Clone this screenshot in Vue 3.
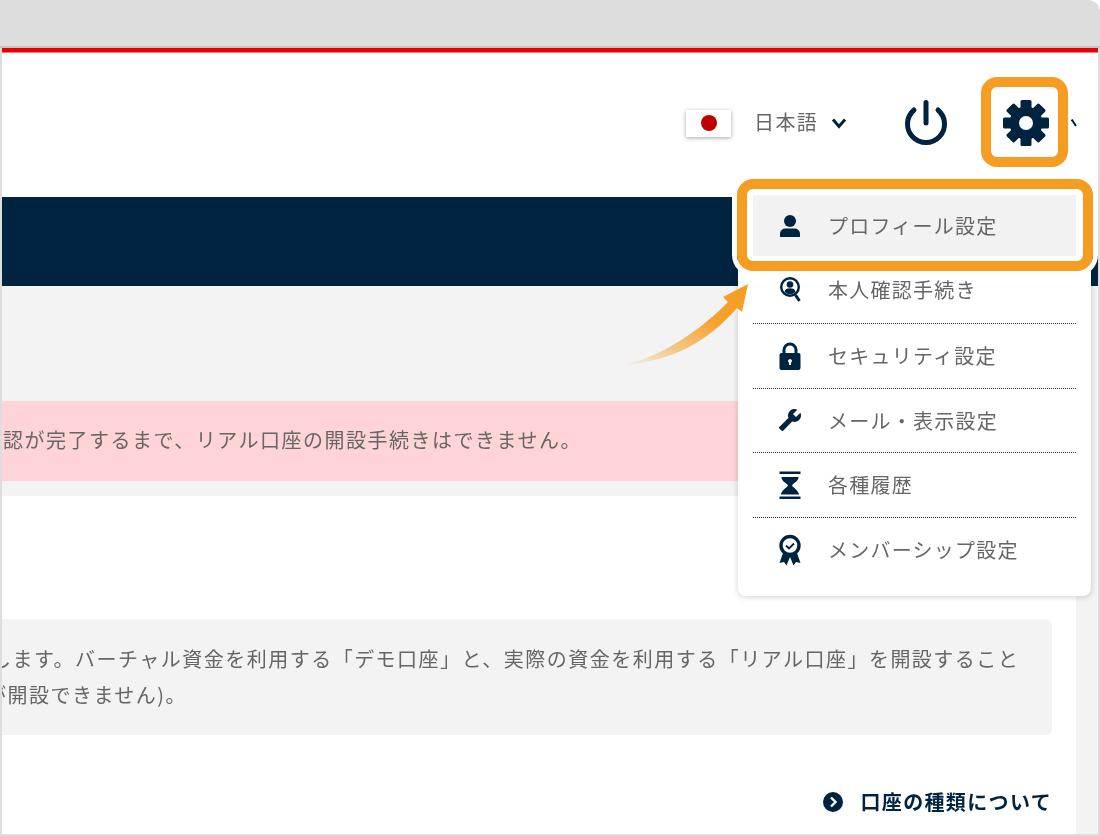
<script setup>
const teeth = [0, 45, 90, 135, 180, 225, 270, 315]
const items = [
  { key: 'person', label: 'プロフィール設定', active: true },
  { key: 'verify', label: '本人確認手続き' },
  { key: 'lock', label: 'セキュリティ設定' },
  { key: 'wrench', label: 'メール・表示設定' },
  { key: 'hourglass', label: '各種履歴' },
  { key: 'award', label: 'メンバーシップ設定' }
]
</script>

<template>
  <div class="window">
    <div class="titlebar"></div>
    <div class="page">
      <div class="redbar"></div>
      <header class="header">
        <span class="flag"><i></i></span>
        <span class="lang soft">日本語</span>
        <svg class="chev" width="16" height="12" viewBox="0 0 16 12"><path d="M2 2.500 8 9.500 14 2.500" fill="none" stroke="#00243f" stroke-width="3"/></svg>
        <svg class="power" width="44" height="46" viewBox="-22 -24 44 46">
          <path d="M-12-14A18.5 18.5 0 1 0 12-14" fill="none" stroke="#00243f" stroke-width="5" stroke-linecap="round"/>
          <path d="M0-21.5V-1" fill="none" stroke="#00243f" stroke-width="5" stroke-linecap="round"/>
        </svg>
        <svg class="gear" width="48" height="48" viewBox="-24 -24 48 48">
          <rect v-for="a in teeth" :key="a" x="-5.5" y="-23" width="11" height="12" rx="1.5" fill="#00243f" :transform="`rotate(${a})`"/>
          <circle r="16.5" fill="#00243f"/>
          <circle r="7" fill="#fff"/>
        </svg>
        <svg class="chev-cut" width="6" height="8" viewBox="0 0 6 8"><path d="M.7.5 5 7" fill="none" stroke="#00243f" stroke-width="2"/></svg>

        <nav class="menu">
          <a v-for="item in items" :key="item.key" class="row" :class="{ active: item.active }">
            <svg class="icon" width="24" height="32" viewBox="0 0 24 32">
              <template v-if="item.key === 'person'">
                <circle cx="12" cy="11" r="6" fill="#00243f"/>
                <path d="M2 27v-3c0-3.500 2.500-5.500 6-5.500h8c3.500 0 6 2 6 5.500v3z" fill="#00243f"/>
              </template>
              <template v-else-if="item.key === 'verify'">
                <circle cx="12" cy="13" r="8.800" fill="none" stroke="#00243f" stroke-width="2.400"/>
                <circle cx="12" cy="10.500" r="3.300" fill="#00243f"/>
                <path d="M6.500 18c.5-3 2.500-3.800 5.500-3.800s5 .8 5.500 3.800a8 8 0 0 1-11 0z" fill="#00243f"/>
                <path d="M17.500 21l4 6" fill="none" stroke="#00243f" stroke-width="3"/>
              </template>
              <template v-else-if="item.key === 'lock'">
                <path d="M6 15v-5a6 6 0 0 1 12 0v5" fill="none" stroke="#00243f" stroke-width="3"/>
                <path fill-rule="evenodd" d="M3 13h18a2 2 0 0 1 1.500 2v13a2 2 0 0 1-1.500 2H3a2 2 0 0 1-1.500-2V15A2 2 0 0 1 3 13zm9 6a2 2 0 0 0-1 3.700V25h2v-2.300A2 2 0 0 0 12 19z" fill="#00243f"/>
              </template>
              <template v-else-if="item.key === 'wrench'">
                <g transform="translate(24 4) scale(-1 1)">
                  <path d="M22.700 19l-9.100-9.100c.9-2.300.4-5-1.500-6.900-2-2-5-2.400-7.400-1.300L9 6 6 9 1.600 4.700C.4 7.100.9 10.100 2.900 12.100c1.900 1.900 4.600 2.400 6.900 1.500l9.100 9.100c.4.4 1 .4 1.400 0l2.300-2.300c.5-.4.5-1.100.1-1.400z" fill="#00243f"/>
                </g>
              </template>
              <template v-else-if="item.key === 'hourglass'">
                <path d="M1.500 2.500h21v2.500h-21zM1.500 27.500h21v2.500h-21z" fill="#00243f"/>
                <path d="M3.500 8h17v1c-1 4-5 5-6.500 7.500 1.500 2.500 5.500 4 7 8.500v.5H3v-.5c1.500-4.500 5.500-6 7-8.500C8.500 14 4.500 13 3.500 9z" fill="#00243f"/>
              </template>
              <template v-else>
                <path d="M5 19 1.500 29l4.500-1 2.500 3.500L12 23l3.500 8.500L18 28l4.500 1L19 19z" fill="#00243f"/>
                <circle cx="12" cy="11.500" r="9" fill="#fff" stroke="#00243f" stroke-width="3.400"/>
                <path d="M8 11.500l3 3 5-5" fill="none" stroke="#00243f" stroke-width="1.800"/>
              </template>
            </svg>
            <span class="soft">{{ item.label }}</span>
          </a>
        </nav>

        <svg class="arrow" width="135" height="88" viewBox="0 0 135 88">
          <defs>
            <linearGradient id="arrow-fade" x1="0" y1="1" x2="1" y2="0">
              <stop offset="0" stop-color="#f59d22" stop-opacity="0"/>
              <stop offset=".3" stop-color="#f59d22" stop-opacity=".5"/>
              <stop offset=".65" stop-color="#f59d22" stop-opacity=".95"/>
              <stop offset="1" stop-color="#f59d22"/>
            </linearGradient>
          </defs>
          <path d="M1 83C30 80 75 55 109 20L104 15 129 2 123 30 118 26C90 58 55 80 1 83z" fill="url(#arrow-fade)"/>
        </svg>

        <div class="frame frame-gear"></div>
        <div class="frame frame-item"></div>
      </header>

      <div class="navy"></div>

      <main class="body">
        <div class="alert"><span class="soft">認が完了するまで、リアル口座の開設手続きはできません。</span></div>
        <section class="panel">
          <div class="note">
            <p class="line-a soft">します。バーチャル資金を利用する「デモ口座」と、実際の資金を利用する「リアル口座」を開設すること</p>
            <p class="line-b soft">が開設できません)。</p>
          </div>
          <a class="link">
            <svg width="22" height="22" viewBox="0 0 22 22">
              <circle cx="11" cy="11" r="10" fill="#00243f"/>
              <path d="M9 6.500 13.500 11 9 15.500" fill="none" stroke="#fff" stroke-width="2.400"/>
            </svg>
            <span class="soft">口座の種類について</span>
          </a>
        </section>
      </main>
    </div>
  </div>
</template>

<style>
html, body { margin: 0; background: #fff; }
</style>

<style scoped>
.window {
  width: 1100px;
  height: 836px;
  display: flex;
  flex-direction: column;
  overflow: hidden;
  background: #ddd;
  border-top-right-radius: 12px;
  font-family: "Noto Sans CJK JP", "Noto Sans", sans-serif;
  color: #666;
}
.soft { filter: blur(.35px); }
.titlebar {
  height: 46px;
  flex: none;
  border-bottom: 2px solid #c6c6c6;
}
.page {
  flex: 1;
  margin: 0 2px 2px;
  min-height: 0;
  position: relative;
  overflow: hidden;
  display: flex;
  flex-direction: column;
}
.redbar {
  height: 4px;
  flex: none;
  background: #e60000;
  border-bottom: 1px solid #f87878;
}
.header {
  height: 144px;
  flex: none;
  background: #fff;
  display: flex;
  align-items: center;
  padding-bottom: 4px;
  box-sizing: border-box;
  padding-left: 684px;
}
.flag {
  width: 45px;
  height: 27px;
  flex: none;
  background: #fff;
  box-shadow: 0 1px 4px rgba(0, 0, 0, .35);
  display: flex;
  align-items: center;
  justify-content: center;
}
.flag i {
  width: 16px;
  height: 16px;
  border-radius: 50%;
  background: #c00000;
}
.lang {
  margin-left: 23px;
  margin-bottom: 2px;
  font-size: 20px;
  letter-spacing: 1.400px;
  line-height: 28px;
}
.chev { margin-left: 13px; flex: none; }
.power { margin-left: 57px; flex: none; }
.gear { margin-left: 54px; flex: none; }
.chev-cut { margin-left: 21px; flex: none; }

.menu {
  position: absolute;
  left: 736px;
  top: 132px;
  width: 353px;
  height: 416px;
  box-sizing: border-box;
  padding: 15px 15px 0;
  background: #fff;
  border-radius: 8px;
  box-shadow: 0 1px 6px rgba(0, 0, 0, .18);
}
.row {
  height: 64.500px;
  box-sizing: border-box;
  display: flex;
  align-items: center;
  padding-left: 25px;
  gap: 26px;
  font-size: 20px;
  letter-spacing: 1.250px;
  border-bottom: 1px dotted #333;
}
.row:last-child { border-bottom: 0; }
.row.active {
  height: 61px;
  background: #f2f2f2;
  border-bottom: 0;
}
.row:nth-child(2) { height: 68px; }
.icon { flex: none; }

.arrow {
  position: absolute;
  left: 617px;
  top: 234px;
}
.frame {
  position: absolute;
  box-sizing: border-box;
  border: 10px solid #f59d22;
  border-radius: 16px;
}
.frame-gear {
  left: 979px;
  top: 29px;
  width: 87px;
  height: 90px;
}
.frame-item {
  left: 735px;
  top: 131px;
  width: 356px;
  height: 92px;
  box-shadow: 0 0 0 5px #fff;
}

.navy {
  height: 89px;
  flex: none;
  background: #00243f;
}
.body {
  flex: 1;
  min-height: 0;
  background: #f3f3f3;
  padding: 115px 22px 0 0;
  display: flex;
  flex-direction: column;
}
.alert {
  height: 80px;
  flex: none;
  box-sizing: border-box;
  background: #ffd4d6;
  display: flex;
  align-items: center;
  padding: 0 0 3px 1px;
  font-size: 20px;
  letter-spacing: 1.500px;
  white-space: nowrap;
}
.panel {
  margin-top: 15px;
  flex: 1;
  min-height: 0;
  background: #fff;
  padding: 123px 24px 0 0;
  box-sizing: border-box;
}
.note {
  height: 116px;
  box-sizing: border-box;
  padding-top: 22px;
  background: #f3f3f3;
  border-radius: 0 6px 6px 0;
  overflow: hidden;
  font-size: 20px;
  letter-spacing: 1.490px;
  line-height: 36px;
  white-space: nowrap;
}
.note p { margin: 0; }
.line-a { margin-left: -11px !important; }
.line-b { margin-left: -16px !important; }
.link {
  margin-top: 55px;
  display: flex;
  justify-content: flex-end;
  align-items: center;
  gap: 16px;
  color: #00243f;
  font-size: 20px;
  font-weight: 700;
  letter-spacing: 1.350px;
  line-height: 24px;
}
</style>
